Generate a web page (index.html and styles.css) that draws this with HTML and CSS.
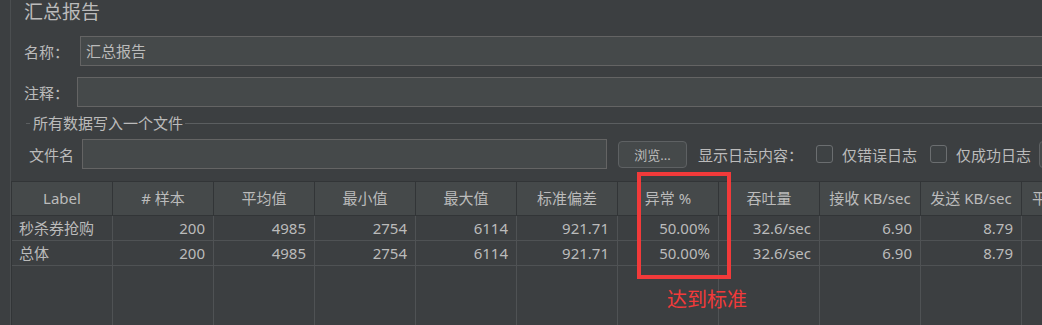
FILE: index.html
```html
<!DOCTYPE html>
<html lang="zh-CN">
<head>
    <meta charset="UTF-8">
    <title>汇总报告</title>
    <link rel="stylesheet" href="styles.css">
</head>
<body>
    <div class="app">
        <div class="rail"></div>
        <main class="panel">
            <div class="form">
                <h1 class="title">汇总报告</h1>
                <div class="field-row name-row">
                    <span class="label">名称：</span>
                    <div class="input">汇总报告</div>
                </div>
                <div class="field-row comment-row">
                    <span class="label">注释：</span>
                    <div class="input"></div>
                </div>
                <div class="group">
                    <div class="legend"><span class="dash"></span><span class="legend-text">所有数据写入一个文件</span><span class="rule"></span></div>
                    <div class="file-row">
                        <span class="label">文件名</span>
                        <div class="input file-input"></div>
                        <button class="btn browse">浏览...</button>
                        <span class="log-label">显示日志内容：</span>
                        <span class="check"><span class="box"></span>仅错误日志</span>
                        <span class="check"><span class="box"></span>仅成功日志</span>
                        <button class="btn config" aria-label="配置"></button>
                    </div>
                </div>
            </div>

            <div class="grid">
                <div class="th">Label</div>
                <div class="th"># 样本</div>
                <div class="th">平均值</div>
                <div class="th">最小值</div>
                <div class="th">最大值</div>
                <div class="th">标准偏差</div>
                <div class="th">异常 %</div>
                <div class="th">吞吐量</div>
                <div class="th">接收 KB/sec</div>
                <div class="th">发送 KB/sec</div>
                <div class="th last">平均字节数</div>

                <div class="td name">秒杀券抢购</div>
                <div class="td">200</div>
                <div class="td">4985</div>
                <div class="td">2754</div>
                <div class="td">6114</div>
                <div class="td">921.71</div>
                <div class="td">50.00%</div>
                <div class="td">32.6/sec</div>
                <div class="td">6.90</div>
                <div class="td">8.79</div>
                <div class="td"></div>

                <div class="td name">总体</div>
                <div class="td">200</div>
                <div class="td">4985</div>
                <div class="td">2754</div>
                <div class="td">6114</div>
                <div class="td">921.71</div>
                <div class="td">50.00%</div>
                <div class="td">32.6/sec</div>
                <div class="td">6.90</div>
                <div class="td">8.79</div>
                <div class="td"></div>

                <div class="fill"></div><div class="fill"></div><div class="fill"></div><div class="fill"></div>
                <div class="fill"></div><div class="fill"></div><div class="fill"></div><div class="fill"></div>
                <div class="fill"></div><div class="fill"></div><div class="fill"></div>
            </div>
        </main>

        <!-- annotation drawn over the screenshot -->
        <div class="mark"></div>
        <div class="note">达到标准</div>
    </div>
</body>
</html>
```

FILE: styles.css
```css
* {
    box-sizing: border-box;
}

body {
    margin: 0;
    background-color: #3c3f41;
    font-family: 'Noto Sans', 'Noto Sans CJK SC', sans-serif;
    font-size: 15px;
    color: #bbbbbb;
    overflow: hidden;
}

.app {
    position: relative;
    display: flex;
    width: 1042px;
    height: 325px;
    overflow: hidden;
}

.rail {
    flex: none;
    width: 11px;
    border-right: 1px solid #4b4e50;
}

.panel {
    flex: 1;
    min-width: 0;
    display: flex;
    flex-direction: column;
    overflow: hidden;
}

.form {
    padding-left: 13px;
}

.title {
    margin: 0;
    height: 36px;
    font-size: 19px;
    font-weight: normal;
    line-height: 25px;
}

.field-row {
    display: flex;
    align-items: center;
    height: 30px;
}

.field-row + .field-row {
    margin-top: 11px;
}

.label {
    flex: none;
    white-space: nowrap;
}

.input {
    flex: 1;
    height: 30px;
    padding: 0 5px;
    line-height: 28px;
    background-color: #45494a;
    border: 1px solid #646464;
}

.name-row .input {
    margin-left: 11px;
    margin-right: -10px;
}

.comment-row .input {
    margin-left: 8px;
    margin-right: -10px;
}

.group {
    margin-left: 2px;
}

.legend {
    display: flex;
    align-items: center;
    height: 18px;
    margin: 7px 0;
}

.dash {
    width: 4px;
    height: 1px;
    background-color: #5b5e60;
}

.legend-text {
    margin: 0 2px 0 3px;
    line-height: 18px;
}

.rule {
    flex: 1;
    height: 1px;
    background-color: #5b5e60;
}

.file-row {
    display: flex;
    align-items: center;
    height: 30px;
    padding-left: 3px;
    white-space: nowrap;
}

.file-input {
    flex: none;
    width: 525px;
    margin-left: 8px;
}

.btn {
    flex: none;
    height: 27px;
    padding: 0;
    font-family: inherit;
    font-size: 13px;
    color: #bbbbbb;
    background-color: #45494a;
    border: 1px solid #5e6163;
    border-radius: 4px;
}

.browse {
    width: 69px;
    margin-left: 11px;
}

.config {
    width: 60px;
    margin-left: 8px;
}

.log-label {
    margin-left: 11px;
}

.check {
    display: flex;
    align-items: center;
    margin-left: 13px;
}

.check .box {
    width: 17px;
    height: 18px;
    margin-right: 9px;
    border: 1px solid #6b6e70;
    border-radius: 3px;
    background-color: #3e4244;
}

.grid {
    flex: 1;
    display: grid;
    grid-template-columns: repeat(11, 101px);
    grid-template-rows: 34px 25px 25px 1fr;
    margin-top: 12px;
    border-top: 1px solid #323537;
    border-left: 1px solid #323537;
}

.th {
    text-align: center;
    line-height: 32px;
    white-space: nowrap;
    overflow: hidden;
    background-color: #45494a;
    border-right: 1px solid #323537;
    border-bottom: 1px solid #323537;
}

.th.last {
    text-align: left;
    padding-left: 10px;
}

.td {
    padding: 0 8px;
    text-align: right;
    line-height: 24px;
    white-space: nowrap;
    border-right: 1px solid #4f5254;
    border-bottom: 1px solid #4f5254;
}

.td.name {
    padding-left: 7px;
    text-align: left;
}

.fill {
    border-right: 1px solid #4f5254;
}

.mark {
    position: absolute;
    left: 637px;
    top: 172px;
    width: 94px;
    height: 107px;
    border: 4px solid #f23a3a;
}

.note {
    position: absolute;
    left: 667px;
    top: 287px;
    font-size: 20px;
    line-height: 26px;
    color: #f23a3a;
}
```
